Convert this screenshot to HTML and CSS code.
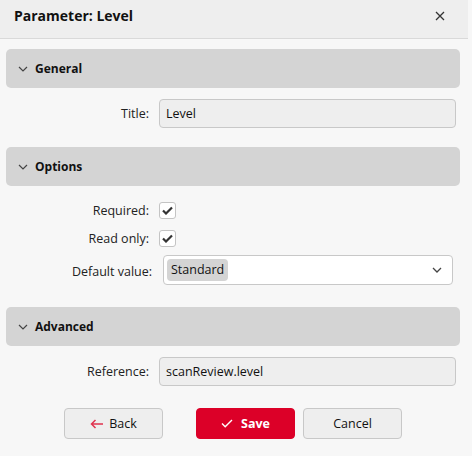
FILE: index.html
```html
<!DOCTYPE html>
<html lang="en">
<head>
    <meta charset="UTF-8">
    <title>Parameter: Level</title>
    <link rel="stylesheet" href="styles.css">
</head>
<body>
    <div class="dialog">
        <div class="dialog-header">
            <h2>Parameter: Level</h2>
            <button class="close" type="button">
                <svg width="10" height="10" viewBox="0 0 10 10"><path d="M1 1L9 9M9 1L1 9" stroke="#333" stroke-width="1.3" fill="none"/></svg>
            </button>
        </div>

        <div class="dialog-body">
            <div class="section-head">
                <svg class="chev" width="10" height="6" viewBox="0 0 10 6"><path d="M1 1L5 5L9 1" stroke="#444" stroke-width="1.2" fill="none"/></svg>
                General
            </div>
            <div class="form-grid general">
                <label>Title:</label>
                <div class="input">Level</div>
            </div>

            <div class="section-head">
                <svg class="chev" width="10" height="6" viewBox="0 0 10 6"><path d="M1 1L5 5L9 1" stroke="#444" stroke-width="1.2" fill="none"/></svg>
                Options
            </div>
            <div class="form-grid options">
                <label>Required:</label>
                <div class="check-wrap"><span class="check">
                    <svg width="11" height="9" viewBox="0 0 11 9"><path d="M1 4.5L4 7.5L10 1.5" stroke="#333" stroke-width="2.2" fill="none"/></svg>
                </span></div>
                <label>Read only:</label>
                <div class="check-wrap"><span class="check">
                    <svg width="11" height="9" viewBox="0 0 11 9"><path d="M1 4.5L4 7.5L10 1.5" stroke="#333" stroke-width="2.2" fill="none"/></svg>
                </span></div>
                <label class="select-label">Default value:</label>
                <div class="select">
                    <span class="chip">Standard</span>
                    <svg width="10" height="6" viewBox="0 0 10 6"><path d="M1 1L5 5L9 1" stroke="#444" stroke-width="1.3" fill="none"/></svg>
                </div>
            </div>

            <div class="section-head">
                <svg class="chev" width="10" height="6" viewBox="0 0 10 6"><path d="M1 1L5 5L9 1" stroke="#444" stroke-width="1.2" fill="none"/></svg>
                Advanced
            </div>
            <div class="form-grid general">
                <label>Reference:</label>
                <div class="input">scanReview.level</div>
            </div>

            <div class="actions">
                <button class="btn back" type="button">
                    <svg width="14" height="10" viewBox="0 0 14 10"><path d="M13 5H1.5M5.5 1L1.5 5L5.5 9" stroke="#e0334f" stroke-width="1.5" fill="none"/></svg>
                    Back
                </button>
                <button class="btn save" type="button">
                    <svg width="12" height="9" viewBox="0 0 12 9"><path d="M1 4.5L4.2 7.7L11 1" stroke="#fff" stroke-width="1.4" fill="none"/></svg>
                    Save
                </button>
                <button class="btn" type="button">Cancel</button>
            </div>
        </div>
    </div>
</body>
</html>
```

FILE: styles.css
```css
* {
    margin: 0;
    padding: 0;
    box-sizing: border-box;
}

body {
    font-family: 'Segoe UI', 'Open Sans', sans-serif;
    font-size: 12.5px;
    color: #111;
    background: #f7f7f7;
    width: 472px;
    height: 456px;
    overflow: hidden;
}

.dialog-header {
    height: 39px;
    background: #eeeeee;
    border-bottom: 1px solid #d9d9d9;
    display: flex;
    align-items: center;
    justify-content: space-between;
    padding: 0 23px 7px 14px;
    margin-right: 4px;
}

.dialog-header h2 {
    font-size: 14px;
    font-weight: 700;
    color: #111;
}

.close {
    background: none;
    border: none;
    display: flex;
    padding: 0;
    margin-top: 1px;
}

.dialog-body {
    padding: 10px 12px 0 6px;
}

.section-head {
    height: 39px;
    background: #d4d4d4;
    border-radius: 5px;
    display: flex;
    align-items: center;
    padding-left: 12px;
    font-weight: 700;
    font-size: 12px;
    color: #111;
}

.chev {
    margin-right: 7px;
}

.form-grid {
    display: grid;
    grid-template-columns: 143px 1fr;
    column-gap: 10px;
    align-items: center;
    padding-right: 4px;
}

.form-grid.general {
    margin: 11px 0 19px;
}

.form-grid.options {
    margin: 14px 0 21px;
    row-gap: 8px;
    grid-template-rows: 20px 20px 30px;
}

.form-grid label {
    text-align: right;
    color: #222;
}

.input {
    height: 29px;
    background: #eeeeee;
    border: 1px solid #c8c8c8;
    border-radius: 4px;
    display: flex;
    align-items: center;
    padding-left: 6px;
}

.check-wrap {
    display: flex;
}

.check {
    width: 17px;
    height: 17px;
    border: 1px solid #c4c4c4;
    border-radius: 3px;
    background: #fff;
    display: flex;
    align-items: center;
    justify-content: center;
}

.select-label {
    margin-right: -3px;
}

.select {
    height: 30px;
    background: #fff;
    border: 1px solid #c8c8c8;
    border-radius: 4px;
    margin: -2px 3px 0 4px;
    display: flex;
    align-items: center;
    justify-content: space-between;
    padding: 0 10px 0 3px;
}

.chip {
    background: #d4d4d4;
    border-radius: 4px;
    padding: 2px 4px;
    line-height: 18px;
    min-width: 58px;
}

.actions {
    display: flex;
    justify-content: center;
    gap: 8px;
    margin-top: 22px;
}

.btn {
    width: 99px;
    height: 31px;
    border: 1px solid #c8c8c8;
    border-radius: 4px;
    background: #eeeeee;
    font-family: inherit;
    font-size: 12.5px;
    color: #111;
    display: flex;
    align-items: center;
    justify-content: center;
    gap: 5px;
}

.btn.back {
    margin-right: 25px;
}

.btn.save {
    background: #dc0028;
    border-color: #dc0028;
    color: #fff;
    font-weight: 700;
    gap: 8px;
}
```
